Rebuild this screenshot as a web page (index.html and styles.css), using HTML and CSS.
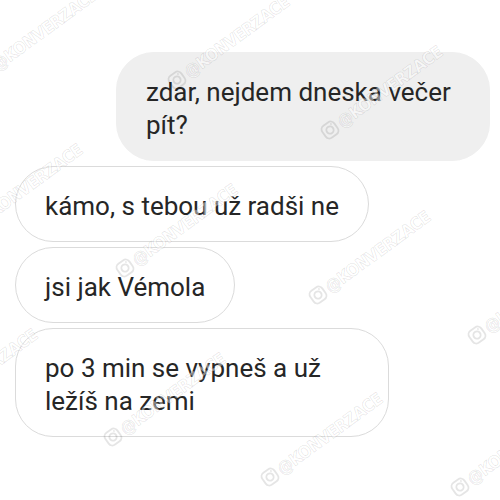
FILE: index.html
```html
<!DOCTYPE html>
<html>
<head>
<meta charset="utf-8">
<title>konverzace</title>
<link rel="stylesheet" href="styles.css">
</head>
<body>
<div class="chat">
	<p class="msg mine">zdar, nejdem dneska večer pít?</p>
	<p class="msg">kámo, s tebou už radši ne</p>
	<p class="msg">jsi jak Vémola</p>
	<p class="msg">po 3 min se vypneš a už ležíš na zemi</p>
</div>

<!-- vodoznak -->
<div class="marks">
	<span class="mark m1"><svg viewBox="0 0 16 16"><rect x="1.5" y="1.5" width="13" height="13" rx="4"/><circle cx="8" cy="8" r="3.2"/><circle class="dot" cx="11.8" cy="4.2" r="0.8"/></svg>@KONVERZACE</span>
	<span class="mark m2"><svg viewBox="0 0 16 16"><rect x="1.5" y="1.5" width="13" height="13" rx="4"/><circle cx="8" cy="8" r="3.2"/><circle class="dot" cx="11.8" cy="4.2" r="0.8"/></svg>@KONVERZACE</span>
	<span class="mark m3"><svg viewBox="0 0 16 16"><rect x="1.5" y="1.5" width="13" height="13" rx="4"/><circle cx="8" cy="8" r="3.2"/><circle class="dot" cx="11.8" cy="4.2" r="0.8"/></svg>@KONVERZACE</span>
	<span class="mark m4"><svg viewBox="0 0 16 16"><rect x="1.5" y="1.5" width="13" height="13" rx="4"/><circle cx="8" cy="8" r="3.2"/><circle class="dot" cx="11.8" cy="4.2" r="0.8"/></svg>@KONVERZACE</span>
	<span class="mark m5"><svg viewBox="0 0 16 16"><rect x="1.5" y="1.5" width="13" height="13" rx="4"/><circle cx="8" cy="8" r="3.2"/><circle class="dot" cx="11.8" cy="4.2" r="0.8"/></svg>@KONVERZACE</span>
	<span class="mark m6"><svg viewBox="0 0 16 16"><rect x="1.5" y="1.5" width="13" height="13" rx="4"/><circle cx="8" cy="8" r="3.2"/><circle class="dot" cx="11.8" cy="4.2" r="0.8"/></svg>@KONVERZACE</span>
	<span class="mark m7"><svg viewBox="0 0 16 16"><rect x="1.5" y="1.5" width="13" height="13" rx="4"/><circle cx="8" cy="8" r="3.2"/><circle class="dot" cx="11.8" cy="4.2" r="0.8"/></svg>@KONVERZACE</span>
	<span class="mark m8"><svg viewBox="0 0 16 16"><rect x="1.5" y="1.5" width="13" height="13" rx="4"/><circle cx="8" cy="8" r="3.2"/><circle class="dot" cx="11.8" cy="4.2" r="0.8"/></svg>@KONVERZACE</span>
	<span class="mark m9"><svg viewBox="0 0 16 16"><rect x="1.5" y="1.5" width="13" height="13" rx="4"/><circle cx="8" cy="8" r="3.2"/><circle class="dot" cx="11.8" cy="4.2" r="0.8"/></svg>@KONVERZACE</span>
	<span class="mark m10"><svg viewBox="0 0 16 16"><rect x="1.5" y="1.5" width="13" height="13" rx="4"/><circle cx="8" cy="8" r="3.2"/><circle class="dot" cx="11.8" cy="4.2" r="0.8"/></svg>@KONVERZACE</span>
	<span class="mark m11"><svg viewBox="0 0 16 16"><rect x="1.5" y="1.5" width="13" height="13" rx="4"/><circle cx="8" cy="8" r="3.2"/><circle class="dot" cx="11.8" cy="4.2" r="0.8"/></svg>@KONVERZACE</span>
</div>
</body>
</html>
```

FILE: styles.css
```css
*{ margin:0; padding:0; box-sizing:border-box;}
html,body{ width:500px; height:500px; overflow:hidden;}
body{ background:#fff; font-family:Roboto, "Noto Sans", sans-serif; color:#262626; position:relative;}

.chat{ display:flex; flex-direction:column; align-items:flex-start; gap:5px; padding:52px 10px 0 15px;}
.msg{ max-width:374px; font-size:26px; line-height:33px; padding:23px 29px 18px; border:1px solid #dbdbdb; border-radius:38px; background:#fff;}
.msg.mine{ align-self:flex-end; background:#efefef; border-color:#efefef;}

/* vodoznak */
.marks{ position:absolute; left:0; top:0; width:500px; height:500px; overflow:hidden; pointer-events:none;}
.mark{ position:absolute; display:flex; align-items:center; gap:2px; height:20px; transform-origin:9px 50%; transform:rotate(-36deg); font-family:"DejaVu Sans Condensed", "DejaVu Sans", sans-serif; font-stretch:condensed; font-weight:bold; font-size:17px; letter-spacing:-0.5px; color:rgba(255,255,255,0.45); -webkit-text-stroke:0.8px rgba(0,0,0,0.1); white-space:nowrap;}
.mark svg{ width:18px; height:18px; fill:none; stroke:rgba(0,0,0,0.1); stroke-width:1.7;}
.mark svg .dot{ fill:rgba(0,0,0,0.1); stroke:none;}
.m1{ left:-24px; top:63px;}
.m2{ left:168px; top:70px;}
.m3{ left:321px; top:120px;}
.m4{ left:-39px; top:218px;}
.m5{ left:116px; top:258px;}
.m6{ left:309px; top:285px;}
.m7{ left:468px; top:325px;}
.m8{ left:-84px; top:403px;}
.m9{ left:104px; top:427px;}
.m10{ left:261px; top:467px;}
.m11{ left:451px; top:477px;}
```
